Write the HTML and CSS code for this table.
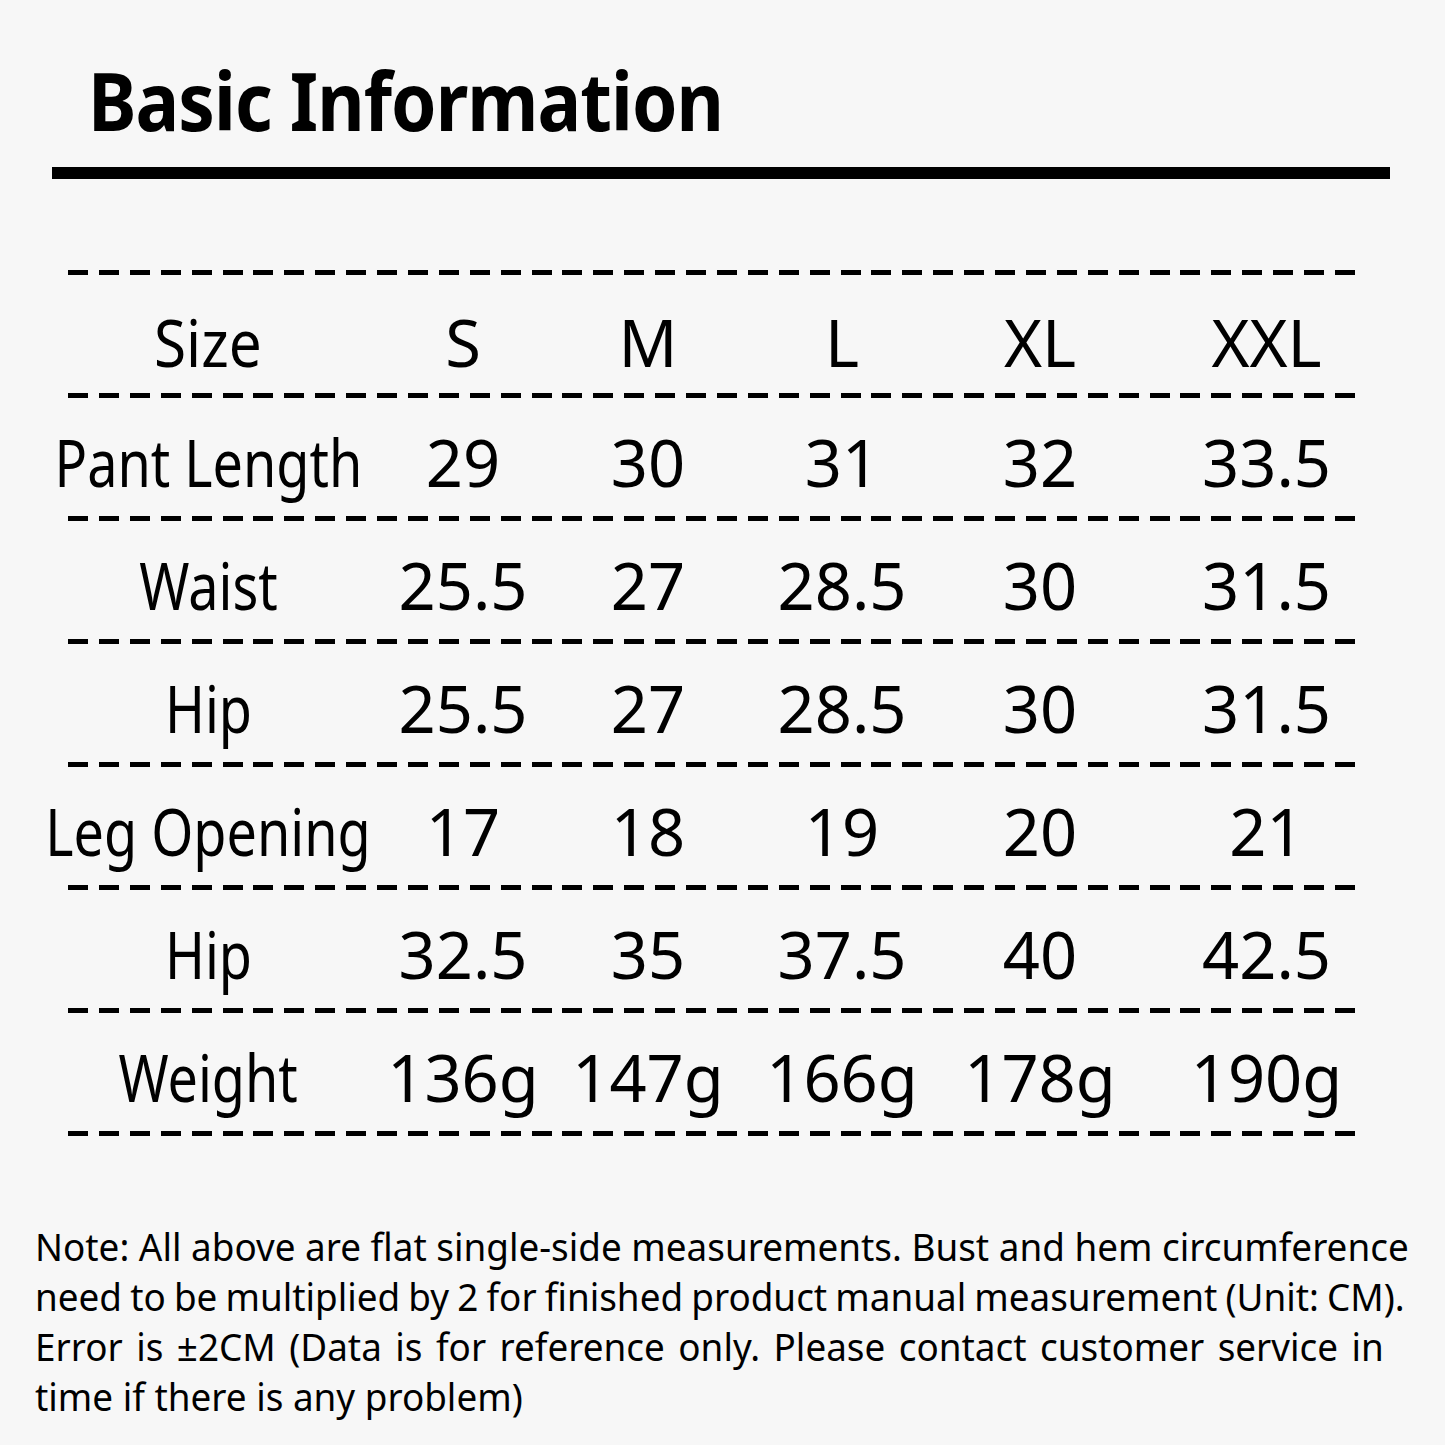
FILE: index.html
```html
<!DOCTYPE html>
<html lang="en">
<head>
<meta charset="utf-8">
<title>Basic Information</title>
<link rel="stylesheet" href="styles.css">
</head>
<body>
<main class="page">
  <h1 class="title"><span class="title-text">Basic Information</span></h1>
  <div class="rule"></div>

  <section class="table">
    <div class="dash"></div>
    <div class="row first"><div class="cell label"><span class="wide">Size</span></div><div class="cell">S</div><div class="cell">M</div><div class="cell">L</div><div class="cell">XL</div><div class="cell last">XXL</div></div>
    <div class="dash"></div>
    <div class="row"><div class="cell label"><span>Pant Length</span></div><div class="cell">29</div><div class="cell">30</div><div class="cell">31</div><div class="cell">32</div><div class="cell last">33.5</div></div>
    <div class="dash"></div>
    <div class="row"><div class="cell label"><span>Waist</span></div><div class="cell">25.5</div><div class="cell">27</div><div class="cell">28.5</div><div class="cell">30</div><div class="cell last">31.5</div></div>
    <div class="dash"></div>
    <div class="row"><div class="cell label"><span>Hip</span></div><div class="cell">25.5</div><div class="cell">27</div><div class="cell">28.5</div><div class="cell">30</div><div class="cell last">31.5</div></div>
    <div class="dash"></div>
    <div class="row"><div class="cell label"><span>Leg Opening</span></div><div class="cell">17</div><div class="cell">18</div><div class="cell">19</div><div class="cell">20</div><div class="cell last">21</div></div>
    <div class="dash"></div>
    <div class="row"><div class="cell label"><span>Hip</span></div><div class="cell">32.5</div><div class="cell">35</div><div class="cell">37.5</div><div class="cell">40</div><div class="cell last">42.5</div></div>
    <div class="dash"></div>
    <div class="row"><div class="cell label"><span>Weight</span></div><div class="cell">136g</div><div class="cell">147g</div><div class="cell">166g</div><div class="cell">178g</div><div class="cell last">190g</div></div>
    <div class="dash"></div>
  </section>

  <p class="note"><span class="note-line">Note: All above are flat single-side measurements. Bust and hem circumference</span><span class="note-line tight">need to be multiplied by 2 for finished product manual measurement (Unit: CM).</span><span class="note-line loose">Error is ±2CM (Data is for reference only. Please contact customer service in</span><span class="note-line">time if there is any problem)</span></p>
</main>
</body>
</html>
```

FILE: styles.css
```css
html, body {
  margin: 0;
  padding: 0;
  background: #f7f7f7;
}

body {
  width: 1445px;
  height: 1445px;
  overflow: hidden;
  color: #000;
  font-family: "Noto Sans", "Open Sans", "DejaVu Sans", sans-serif;
}

.page {
  display: flex;
  flex-direction: column;
  padding-top: 59px;
}

.title {
  margin: 0 0 0 88px;
  font-size: 81px;
  line-height: 81px;
  font-weight: 700;
  letter-spacing: -1px;
  white-space: nowrap;
}

.title-text {
  display: inline-block;
  transform: scaleX(0.9);
  transform-origin: left center;
}

.rule {
  margin: 27px 0 0 52px;
  width: 1338px;
  height: 12px;
  background: #000;
}

.table {
  margin: 91px 0 0 68px;
  width: 1287px;
  display: flex;
  flex-direction: column;
}

.dash {
  height: 5px;
  background: repeating-linear-gradient(to right, #000 0, #000 20px, transparent 20px, transparent 30.9px);
}

.row {
  display: grid;
  grid-template-columns: 274px 242px 128px 260px 136px 247px;
  height: 118px;
  box-sizing: border-box;
  padding-top: 14px;
}

.row.first {
  padding-top: 17px;
}

.cell {
  display: flex;
  justify-content: center;
  white-space: nowrap;
  font-size: 65px;
  line-height: 100px;
}

.cell.label {
  padding-left: 6px;
}

.cell.label span {
  display: inline-block;
  transform: scaleX(0.83);
  transform-origin: center center;
}

.cell.label span.wide {
  transform: scaleX(0.9);
}

.cell.last {
  padding-left: 70px;
}

.note {
  margin: 85px 0 0 35px;
  font-size: 38px;
  line-height: 50px;
  white-space: nowrap;
  transform: scaleX(0.97);
  transform-origin: left top;
}

.note-line {
  display: block;
}

.note-line.tight {
  word-spacing: -1.5px;
}

.note-line.loose {
  word-spacing: 4px;
}
```
